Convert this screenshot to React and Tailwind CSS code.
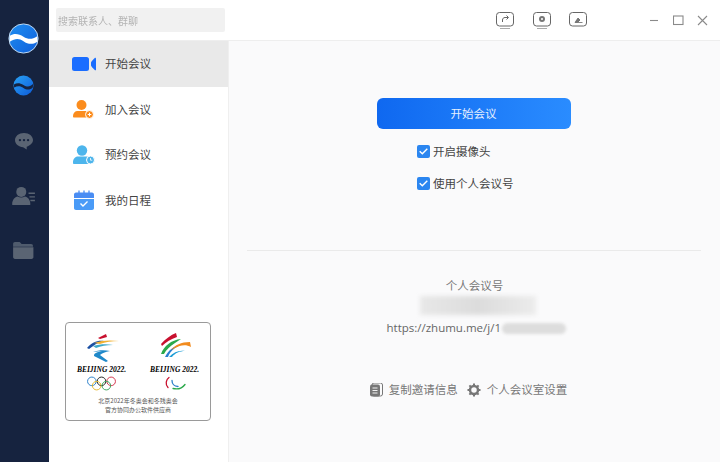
const sans = { fontFamily: '"Noto Sans CJK SC", "Open Sans", sans-serif' };

function Logo() {
  return (
    <svg width="31" height="31" viewBox="0 0 34 34">
      <defs>
        <linearGradient id="lg1" x1="0" y1="0" x2="1" y2="1">
          <stop offset="0" stopColor="#1f8ef0" />
          <stop offset="1" stopColor="#0f5fdc" />
        </linearGradient>
      </defs>
      <circle cx="17" cy="17" r="16" fill="url(#lg1)" stroke="#cfe6fb" strokeWidth="1" />
      <path d="M2 14C7 11 12 12 17 15s9 3.500 15-.5c.5 2.500.4 4 0 6-5 3.500-10 3-15-.5s-9-3.500-15 .5c-.5-2-.5-4 0-6.500z" fill="#fff" />
    </svg>
  );
}

function Logo2() {
  return (
    <svg width="21" height="21" viewBox="0 0 22 22">
      <defs>
        <linearGradient id="lg2" x1="0" y1="0" x2="1" y2="1">
          <stop offset="0" stopColor="#2aa3f5" />
          <stop offset="1" stopColor="#0d5ad8" />
        </linearGradient>
      </defs>
      <circle cx="11" cy="11" r="10.500" fill="url(#lg2)" />
      <path d="M1 10c3-2 6-2 10 .5s7 2 10-1c0 1.500 0 2.500-.3 3.500-3 3-6.700 2.500-9.700.5s-6-2.500-9.700-.5C.9 12 1 11 1 10z" fill="#16233f" />
    </svg>
  );
}

function RailIcon({ kind }) {
  const c = '#5a6473';
  if (kind === 'chat')
    return (
      <svg width="20" height="18" viewBox="0 0 22 20">
        <path d="M11 1C5.200 1 1 4.600 1 9c0 4.300 4 7.700 9 8l4 2.500v-3.200c4-1.100 7-4 7-7.300 0-4.400-4.200-8-10-8z" fill={c} />
        <circle cx="6.500" cy="9" r="1.300" fill="#16233f" />
        <circle cx="11" cy="9" r="1.300" fill="#16233f" />
        <circle cx="15.500" cy="9" r="1.300" fill="#16233f" />
      </svg>
    );
  if (kind === 'contact')
    return (
      <svg width="24" height="20" viewBox="0 0 26 22">
        <circle cx="10" cy="6.500" r="5.500" fill={c} />
        <path d="M0 20c0-5 3-8 6-8.500 2.500 1.500 5.500 1.500 8 0 3 .5 6 3.500 6 8.500 0 .7-.5 1-1 1H1c-.5 0-1-.3-1-1z" fill={c} />
        <path d="M18 8h7M19 12h6M20 16h5" stroke={c} strokeWidth="1.500" />
      </svg>
    );
  return (
    <svg width="21" height="17" viewBox="0 0 22 18">
      <path d="M0 2c0-1 .7-2 2-2h5l2 2h10c1.500 0 2 1 2 2v1H0z" fill="#4f5b6d" />
      <path d="M0 5.500h21.500V16c0 1-.7 2-2 2H2c-1.300 0-2-1-2-2z" fill={c} />
    </svg>
  );
}

function MenuIcon({ kind }) {
  if (kind === 'video')
    return (
      <svg width="24" height="14" viewBox="0 0 24 14">
        <rect x="0" y="0" width="17" height="14" rx="2.500" fill="#1a6dff" />
        <path d="M19 6c0-1 .5-1.600 1.300-2.500L23 .8c.4-.3 1 0 1 .5v11.400c0 .5-.6.8-1 .5l-2.700-2.700C19.500 9.600 19 9 19 8z" fill="#1a6dff" />
      </svg>
    );
  if (kind === 'join')
    return (
      <svg width="21" height="19" viewBox="0 0 21 19" className="ml-[1px]">
        <circle cx="8.500" cy="5" r="5" fill="#fb8c1d" />
        <path d="M0 16c0-3 2-5 4.500-5h8c2 0 4 1.500 4 5v1.500H1c-.6 0-1-.5-1-1z" fill="#fb8c1d" />
        <circle cx="16.500" cy="14.500" r="4" fill="#fb8c1d" stroke="#fff" strokeWidth="1" />
        <path d="M14.700 14.500h3.600M16.500 12.700v3.600" stroke="#fff" strokeWidth="1" />
      </svg>
    );
  if (kind === 'schedule')
    return (
      <svg width="22" height="20" viewBox="0 0 22 20" className="ml-[1px]">
        <circle cx="9" cy="5.500" r="5.200" fill="#4db5ec" />
        <path d="M0 17c0-3 2-5.500 5-5.500h8c2.500 0 4.500 2 4.500 5.500v2H1c-.6 0-1-.5-1-1z" fill="#4db5ec" />
        <circle cx="17.500" cy="15" r="4" fill="#4db5ec" stroke="#fff" strokeWidth="1" />
        <path d="M17.500 13v2.200h1.800" stroke="#fff" strokeWidth=".8" fill="none" />
      </svg>
    );
  return (
    <svg width="20" height="20" viewBox="0 0 20 20" className="ml-[2px]">
      <path d="M0 4.500C0 3.500.8 2.500 2 2.500h16c1.200 0 2 1 2 2V8H0z" fill="#4a8df3" />
      <path d="M0 9h20v9c0 1.200-.8 2-2 2H2c-1.200 0-2-.8-2-2z" fill="#4a9bf7" />
      <path d="M5 .5v5M10 .5v5M15 .5v5" stroke="#4a8df3" strokeWidth="1.300" />
      <path d="M6.500 13.500l2.500 2.500 4.500-4.500" stroke="#fff" strokeWidth="1.400" fill="none" />
    </svg>
  );
}

function MenuItem({ kind, label, active }) {
  return (
    <div className={`h-[45.500px] flex items-center ${active ? 'bg-[#e9e9e9]' : ''}`}>
      <div className="w-[56px] pl-[23px] flex items-center justify-start shrink-0">
        <MenuIcon kind={kind} />
      </div>
      <span className="text-[11.500px] text-[#444]">{label}</span>
    </div>
  );
}

function TopIcon({ kind }) {
  return (
    <div className="flex flex-col items-center gap-[1px] mt-[1px]">
      <svg width="18" height="15" viewBox="0 0 18 15" fill="none" stroke="#666" strokeWidth="1">
        <rect x=".5" y=".5" width="17" height="13.500" rx="3" />
        {kind === 'share' && <path d="M6.500 10V8c0-1.500 1-2.500 2.500-2.500h3M10.500 3.500l2 2-2 2" />}
        {kind === 'gear' && (
          <>
            <circle cx="9" cy="7" r="3" fill="#777" stroke="none" />
            <circle cx="9" cy="7" r="1" fill="#fff" stroke="none" />
          </>
        )}
        {kind === 'pen' && <path d="M6 10.500l3-4.500 2 2-2.500 2.500zM8.500 10.500h5" fill="#777" strokeWidth=".8" />}
      </svg>
      <div className={`h-[1px] w-[10px] ${kind === 'pen' ? '' : 'bg-[#aaa]'}`} />
    </div>
  );
}

function Check({ label }) {
  return (
    <div className="flex items-center gap-[3px]">
      <div className="w-[13px] h-[13px] rounded-[2px] bg-[#2b86f0] flex items-center justify-center">
        <svg width="9" height="7" viewBox="0 0 9 7" fill="none" stroke="#fff" strokeWidth="1.400">
          <path d="M.7 3.300l2.600 2.500L8.300.8" />
        </svg>
      </div>
      <span className="text-[11.500px] text-[#444] leading-[13px]">{label}</span>
    </div>
  );
}

function Beijing({ children }) {
  return <div className="flex flex-col items-center w-[56px]">{children}</div>;
}

function WinterEmblem() {
  return (
    <svg width="36" height="30" viewBox="0 0 36 30" fill="none">
      <path d="M14 6l8-4 1 3-7 2z" fill="#c8102e" />
      <path d="M3 16C8 10 14 8 20 9l-8 3-7 5z" fill="#1a4fa3" />
      <path d="M10 11c8-3 16-3 25-2-7 0-14 1-19 3z" fill="#f2b233" />
      <path d="M9 14c7-2 14-2 20-1-7 0-12 1-17 3z" fill="#3ea9c9" />
      <path d="M9 20c5-2 12-2 17-1-5 1-8 2-10 4l8 6-2 1-12-6c0-2 0-3 8-5z" fill="#1e88c9" />
    </svg>
  );
}

function ParaEmblem() {
  return (
    <svg width="32" height="30" viewBox="0 0 32 30" fill="none">
      <path d="M2 12C6 7 12 3 17 1l1 4C12 7 7 10 3 14z" fill="#c8102e" />
      <path d="M2 22C5 14 12 8 22 7l-6 4c-5 3-9 7-11 11z" fill="#2aa84a" />
      <path d="M6 25c3-6 8-11 15-12l-5 3c-4 3-6 6-7 9z" fill="#2a7fd1" />
      <path d="M12 18c4-5 10-8 19-8l1 5c-5-3-11-2-16 1z" fill="#f28b1e" />
      <path d="M10 25c5-5 10-7 16-6-5 0-10 2-13 6z" fill="#1e9ed6" />
    </svg>
  );
}

function Rings() {
  const cols = ['#2a7fc9', '#222', '#d2324a', '#e8b82e', '#3aa35a'];
  const pos = [[5, 5], [14, 5], [23, 5], [9.500, 9], [18.500, 9]];
  return (
    <svg width="33" height="15" viewBox="0 0 28 14" fill="none" className="mt-[2px]">
      {pos.map((p, i) => (
        <circle key={i} cx={p[0]} cy={p[1]} r="4" stroke={cols[i]} strokeWidth=".9" />
      ))}
    </svg>
  );
}

function ParaMark() {
  return (
    <svg width="22" height="15" viewBox="0 0 22 14" fill="none" strokeWidth="1.300" strokeLinecap="round" className="mt-[2px]">
      <path d="M5 1C2 3 1 8 4 11" stroke="#c8102e" />
      <path d="M8 4c0 3 2 6 6 6" stroke="#2a7fc9" />
      <path d="M9 12c4 1 9 0 12-4" stroke="#2aa84a" />
    </svg>
  );
}

const brand = 'text-[7.500px] italic font-bold leading-[9px] text-black whitespace-nowrap mt-[3px]';

export default function App() {
  return (
    <div className="w-[720px] h-[462px] flex bg-white overflow-hidden" style={sans}>
      <div className="w-[49px] shrink-0 bg-[#16233f] flex flex-col items-center pr-[2px]">
        <div className="mt-[23px]"><Logo /></div>
        <div className="mt-[21px]"><Logo2 /></div>
        <div className="mt-[36px]"><RailIcon kind="chat" /></div>
        <div className="mt-[36px]"><RailIcon kind="contact" /></div>
        <div className="mt-[36px]"><RailIcon kind="folder" /></div>
      </div>
      <div className="flex-1 flex flex-col min-w-0">
        <div className="h-[41px] shrink-0 border-b border-[#eeeeee] flex items-center">
          <div className="ml-[7px] w-[169px] h-[24px] bg-[#f1f1f1] rounded-[2px] flex items-center px-[2px] text-[10px] text-[#b4b4b4] blur-[0.4px]">
            搜索联系人、群聊
          </div>
          <div className="ml-[271px] flex items-center gap-[18.500px]">
            <TopIcon kind="share" />
            <TopIcon kind="gear" />
            <TopIcon kind="pen" />
          </div>
          <div className="ml-[62px] flex items-center gap-[13px]">
            <svg width="11" height="11" viewBox="0 0 11 11" stroke="#8a8a8a" strokeWidth="1.100"><path d="M1 5.500h8" /></svg>
            <svg width="11" height="11" viewBox="0 0 11 11" stroke="#8a8a8a" strokeWidth="1.100" fill="none"><rect x=".5" y="1" width="9.500" height="8.500" /></svg>
            <svg width="11" height="11" viewBox="0 0 11 11" stroke="#8a8a8a" strokeWidth="1.100"><path d="M1 1l9 9M10 1l-9 9" /></svg>
          </div>
        </div>
        <div className="flex-1 flex min-h-0">
          <div className="w-[180px] shrink-0 flex flex-col pb-[41px] border-r border-[#efefef]">
            <MenuItem kind="video" label="开始会议" active />
            <MenuItem kind="join" label="加入会议" />
            <MenuItem kind="schedule" label="预约会议" />
            <MenuItem kind="cal" label="我的日程" />
            <div className="mt-auto ml-[16px] mr-[17px] h-[99px] border border-[#9a9a9a] rounded-[4px] bg-white flex flex-col items-center pt-[9px]">
              <div className="flex gap-[17px]">
                <Beijing>
                  <WinterEmblem />
                  <span className={brand} style={{ fontFamily: '"Liberation Serif", serif' }}>BEIJING 2022.</span>
                  <Rings />
                </Beijing>
                <Beijing>
                  <ParaEmblem />
                  <span className={brand} style={{ fontFamily: '"Liberation Serif", serif' }}>BEIJING 2022.</span>
                  <ParaMark />
                </Beijing>
              </div>
              <div className="mt-[5px] text-[6px] leading-[9px] text-[#555] text-center whitespace-nowrap">
                <div>北京2022年冬奥会和冬残奥会</div>
                <div>官方协同办公软件供应商</div>
              </div>
            </div>
          </div>
          <div className="flex-1 bg-[#fafafb] flex flex-col items-center pr-[2px]">
            <div className="mt-[57px] w-[194px] h-[31px] rounded-[6px] bg-gradient-to-r from-[#0f68f0] to-[#2a8cff] flex items-center justify-center text-[11.500px] text-[#e6f0ff]">
              开始会议
            </div>
            <div className="self-start ml-[188px] mt-[16px] flex flex-col gap-[19px]">
              <Check label="开启摄像头" />
              <Check label="使用个人会议号" />
            </div>
            <div className="mt-[60px] w-[454px] h-[1px] bg-[#eaeaea]" />
            <div className="mt-[26px] ml-[2px] text-[11.500px] leading-[16px] text-[#777]">个人会议号</div>
            <div className="mt-[3px] ml-[8px] w-[116px] h-[19px] bg-gradient-to-r from-[#e8e8e8] via-[#dcdcdc] to-[#ececec] blur-[2px]" />
            <div className="mt-[5px] ml-[6px] flex items-center w-[180px] text-[11.500px] leading-[16px] text-[#666]">
              <span style={{ fontFamily: '"Open Sans", sans-serif' }}>https://zhumu.me/j/1</span>
              <div className="w-[64px] h-[11px] rounded-full bg-[#dddddd] blur-[1.500px] ml-[1px]" />
            </div>
            <div className="mt-[45px] mr-[10px] flex items-center text-[11.500px] text-[#777]">
              <svg width="13" height="14" viewBox="0 0 13 14" className="mr-[6px]">
                <rect x="2" y="0" width="10.500" height="13" rx="2" fill="none" stroke="#777" strokeWidth="1" />
                <rect x="0" y="1.500" width="10" height="12" rx="2" fill="#777" />
                <path d="M2.500 5h5M2.500 7.500h5M2.500 10h5" stroke="#fff" strokeWidth=".9" />
              </svg>
              <span>复制邀请信息</span>
              <svg width="14" height="14" viewBox="0 0 14 14" className="ml-[9px] mr-[6px]">
                <circle cx="7" cy="7" r="4" fill="none" stroke="#777" strokeWidth="2.500" />
                <path d="M7 .5v2.500M7 11v2.500M.5 7H3M11 7h2.500M2.400 2.400l1.800 1.800M9.800 9.800l1.800 1.800M11.600 2.400L9.800 4.200M4.200 9.800l-1.800 1.800" stroke="#777" strokeWidth="2" />
              </svg>
              <span>个人会议室设置</span>
            </div>
          </div>
        </div>
      </div>
    </div>
  );
}
